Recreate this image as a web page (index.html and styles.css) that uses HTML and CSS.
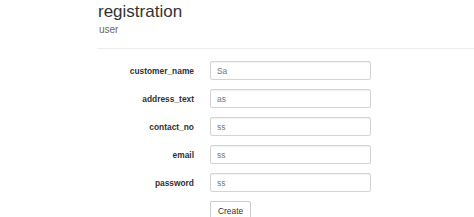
FILE: index.html
```html
<!DOCTYPE html>
<html>
<head>
<meta charset="utf-8">
<link rel="stylesheet" href="styles.css">
</head>
<body>
<div class="page">
  <header class="head">
    <h1 class="title">registration</h1>
    <div class="subtitle">user</div>
  </header>
  <form class="form">
    <div class="row"><label class="label">customer_name</label><input class="field" value="Sa"></div>
    <div class="row"><label class="label">address_text</label><input class="field" value="as"></div>
    <div class="row"><label class="label">contact_no</label><input class="field" value="ss"></div>
    <div class="row"><label class="label">email</label><input class="field" value="ss"></div>
    <div class="row"><label class="label">password</label><input class="field" value="ss"></div>
    <div class="row"><span class="label"></span><button type="button" class="btn">Create</button></div>
  </form>
</div>
</body>
</html>
```
FILE: styles.css
```css
html, body {
  margin: 0;
  padding: 0;
  background: #fff;
}
body {
  font-family: "Liberation Sans", Arial, sans-serif;
  color: #333;
  overflow: hidden;
}
.page {
  padding-left: 97px;
}
.head {
  padding-top: 2px;
  padding-bottom: 10px;
  border-bottom: 1px solid #eeeeee;
}
.title {
  margin: 0;
  font-size: 17px;
  line-height: 20px;
  font-weight: normal;
  padding-left: 1px;
}
.subtitle {
  font-size: 10px;
  line-height: 16px;
  color: #6a6a6a;
  padding-left: 2px;
}
.form {
  display: flex;
  flex-direction: column;
  gap: 9px;
  padding-top: 12px;
}
.row {
  display: flex;
  align-items: center;
  gap: 16px;
}
.label {
  width: 97px;
  text-align: right;
  font-size: 8.4px;
  font-weight: bold;
  color: #333;
}
.field {
  box-sizing: border-box;
  width: 161px;
  height: 19px;
  margin: 0;
  padding: 0 6px;
  border: 1px solid #d4d4d4;
  border-radius: 2px;
  box-shadow: inset 0 1px 1px rgba(0,0,0,0.06);
  font-family: "Liberation Sans", Arial, sans-serif;
  font-size: 8.4px;
  color: #777;
  background: #fff;
}
.btn {
  box-sizing: border-box;
  height: 19px;
  margin: 0;
  padding: 0 7px;
  border: 1px solid #ccc;
  border-radius: 2px;
  background: #fff;
  font-family: "Liberation Sans", Arial, sans-serif;
  font-size: 8.4px;
  color: #333;
}
```
